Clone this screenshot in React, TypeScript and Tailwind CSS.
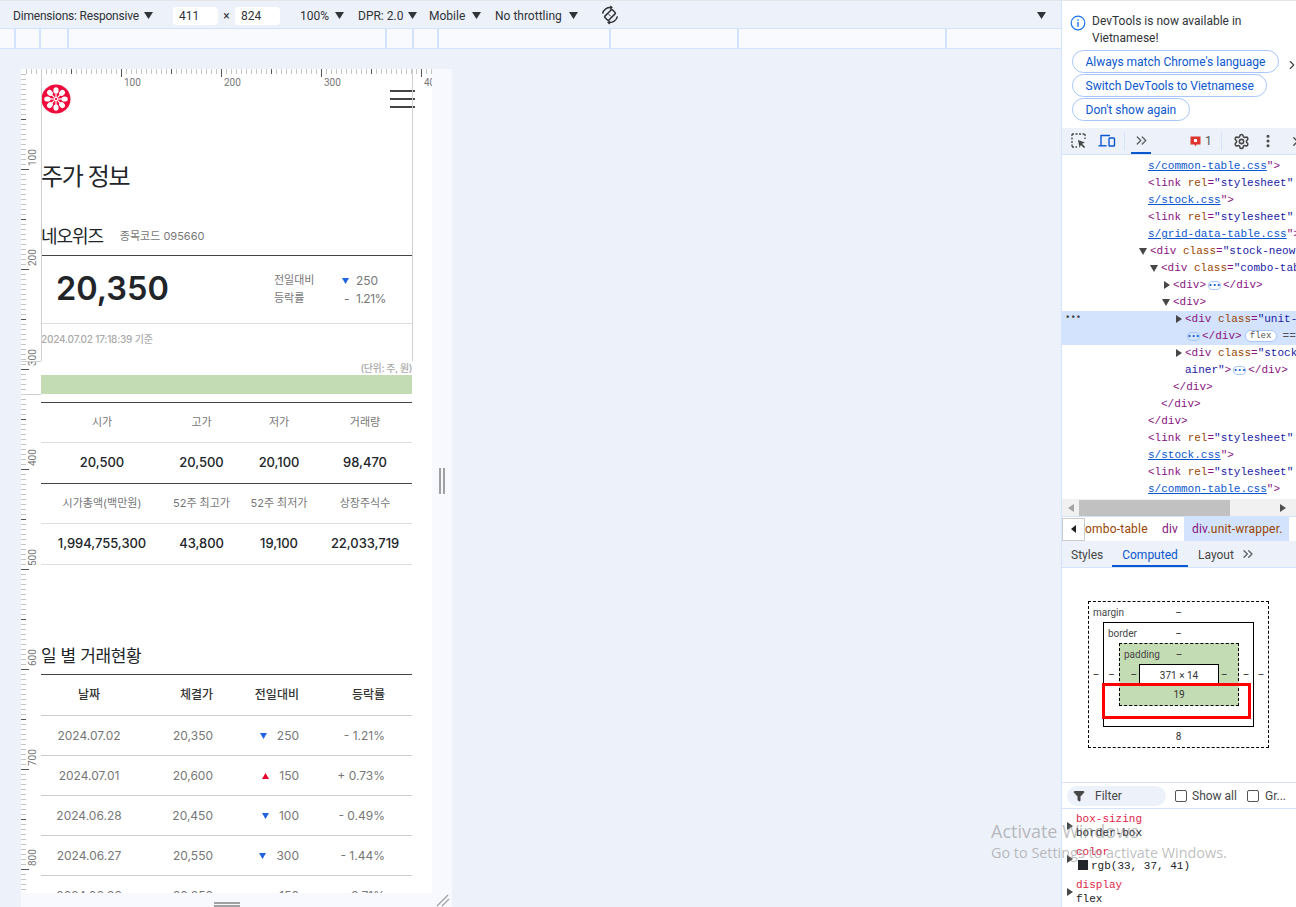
import React from "react";
import { ChevronsRight, ChevronRight, Settings, MoreVertical, X, Filter } from "lucide-react";

const KR = "font-['Inter','Noto_Sans_CJK_KR',sans-serif]";
const UI = "font-['Roboto','Noto_Sans',sans-serif]";
const MONO = "font-['Liberation_Mono','DejaVu_Sans_Mono',monospace]";

function Caret({ className = "" }: { className?: string }) {
  return (
    <svg width="9" height="7" viewBox="0 0 9 7" className={"flex-none " + className}>
      <polygon points="0,0 9,0 4.5,7" fill="#303338" />
    </svg>
  );
}

function Tri({ up = false, className = "" }: { up?: boolean; className?: string }) {
  return (
    <svg width="7" height="6" viewBox="0 0 7 6" className={"flex-none " + className}>
      {up ? <polygon points="3.5,0 7,6 0,6" fill="#e8002d" /> : <polygon points="0,0 7,0 3.5,6" fill="#2264e0" />}
    </svg>
  );
}

function Logo() {
  const arms = [0, 45, 90, 135, 180, 225, 270, 315];
  return (
    <svg width="30" height="30" viewBox="0 0 30 30" className="flex-none">
      <circle cx="15" cy="15" r="14.5" fill="#f00a3c" />
      {arms.map((a) => (
        <g key={a} transform={`rotate(${a} 15 15)`}>
          <line x1="15" y1="13" x2="15" y2="8" stroke="#fff" strokeWidth="1.2" />
          <ellipse cx="15" cy="6.4" rx="2.6" ry="3.2" fill="#fff" />
        </g>
      ))}
      <circle cx="15" cy="15" r="1.6" fill="none" stroke="#fff" strokeWidth="1" />
    </svg>
  );
}

function RulerTop() {
  const ticks = [];
  for (let i = 1; i <= 82; i++) {
    const v = i * 5;
    const major = v % 100 === 0;
    const mid = v % 50 === 0;
    ticks.push(
      <line key={i} x1={v + 0.5} x2={v + 0.5} y1="0" y2={major ? 8 : 5} stroke={major || mid ? "#555" : "#c4c4c4"} />
    );
  }
  return (
    <svg width="411" height="20" viewBox="0 0 411 20" className="absolute left-0 top-0">
      {ticks}
      {[100, 200, 300, 400].map((v) => (
        <text key={v} x={v + 3} y="17" fontSize="10" fill="#777" fontFamily="Roboto, sans-serif">{v}</text>
      ))}
    </svg>
  );
}

function RulerLeft() {
  const ticks = [];
  for (let i = 1; i <= 164; i++) {
    const v = i * 5;
    const major = v % 100 === 0;
    const mid = v % 50 === 0;
    ticks.push(
      <line key={i} y1={v + 0.5} y2={v + 0.5} x1="0" x2={major ? 8 : 5} stroke={major || mid ? "#555" : "#c4c4c4"} />
    );
  }
  return (
    <svg width="20" height="824" viewBox="0 0 20 824" className="absolute left-0 top-0">
      {ticks}
      {[100, 200, 300, 400, 500, 600, 700, 800].map((v) => (
        <text key={v} x="0" y="0" transform={`translate(15 ${v - 3}) rotate(-90)`} fontSize="10" fill="#777" fontFamily="Roboto, sans-serif">{v}</text>
      ))}
    </svg>
  );
}

function StatTable({ heads, vals, last }: { heads: string[]; vals: string[]; last?: boolean }) {
  const cols = "grid grid-cols-[122px_77px_78px_94px] text-center";
  return (
    <div>
      <div className={cols + " h-[40px] items-center text-[11px] text-[#777] border-b border-[#ddd]"}>
        {heads.map((h) => <div key={h} className="whitespace-nowrap">{h}</div>)}
      </div>
      <div className={cols + " h-[41px] items-center text-[13px] font-medium text-[#212529] border-b tracking-[-0.05px] " + (last ? "border-[#ddd]" : "border-[#444]")}>
        {vals.map((v, i) => <div key={i}>{v}</div>)}
      </div>
    </div>
  );
}

const days = [
  { d: "2024.07.02", p: "20,350", c: "250", r: "- 1.21%" },
  { d: "2024.07.01", p: "20,600", c: "150", r: "+ 0.73%", up: true },
  { d: "2024.06.28", p: "20,450", c: "100", r: "- 0.49%" },
  { d: "2024.06.27", p: "20,550", c: "300", r: "- 1.44%" },
  { d: "2024.06.26", p: "20,850", c: "150", r: "- 0.71%" },
];

function Device() {
  return (
    <div className={"relative w-[411px] h-[824px] bg-white overflow-hidden " + KR}>
      <div className="pl-[20px] w-[391px]">
        <div className="h-[58px] pt-[15px] flex justify-between items-start">
          <Logo />
          <div className="flex flex-col gap-[6px] mt-[6px] -mr-[3px] w-[25px]">
            <div className="h-[2px] bg-[#444]" />
            <div className="h-[2px] bg-[#444]" />
            <div className="h-[2px] bg-[#444]" />
          </div>
        </div>
        <h1 className="mt-[30px] mb-[-1px] h-[40px] flex items-center text-[24px] font-normal text-[#212529] tracking-[-1.4px]">주가 정보</h1>
        <div className="h-[60px] pt-[21px] flex items-center border-b border-[#444]">
          <span className="text-[18px] text-[#212529] tracking-[-1.1px]">네오위즈</span>
          <span className="ml-[17px] text-[11px] text-[#777]">종목코드 095660</span>
        </div>
        <div className="h-[68px] flex items-center border-b border-[#ddd]">
          <span className="ml-[15px] w-[218px] text-[32.5px] font-semibold text-[#212529] leading-none">20,350</span>
          <div className="text-[12px] text-[#777]">
            <div className="h-[18px] flex items-center">
              <span className="w-[68px] text-[11px]">전일대비</span>
              <Tri />
              <span className="ml-[7px]">250</span>
            </div>
            <div className="h-[18px] flex items-center">
              <span className="w-[70px] text-[11px]">등락률</span>
              <span className="w-[12px]">-</span>
              <span className="tracking-[-0.5px]">1.21%</span>
            </div>
          </div>
        </div>
        <div className="h-[30px] flex items-center text-[10px] font-medium text-[#aaa] tracking-[-0.2px]">2024.07.02 17:18:39 기준</div>
        <div className="mt-[7px] h-[14px] flex justify-end items-center text-[10px] font-medium text-[#aaa] tracking-[-0.4px]">(단위: 주, 원)</div>
        <div className="h-[19px] mb-[8px] bg-[#c4dcb3]" />
        <div className="border-t border-[#444]">
          <StatTable heads={["시가", "고가", "저가", "거래량"]} vals={["20,500", "20,500", "20,100", "98,470"]} />
          <StatTable heads={["시가총액(백만원)", "52주 최고가", "52주 최저가", "상장주식수"]} vals={["1,994,755,300", "43,800", "19,100", "22,033,719"]} last />
        </div>
        <h2 className="mt-[78px] h-[28px] flex items-center text-[17px] font-normal text-[#212529] tracking-[-0.4px]">일 별 거래현황</h2>
        <div className="mt-[3px] border-t border-[#444]">
          <div className="h-[41px] grid grid-cols-[96px_76px_86px_86px] items-center text-[12px] font-medium text-[#333] border-b border-[#ccc]">
            <div className="text-center">날짜</div>
            <div className="text-right">체결가</div>
            <div className="text-right">전일대비</div>
            <div className="text-right">등락률</div>
          </div>
          {days.map((r) => (
            <div key={r.d} className="h-[40px] grid grid-cols-[96px_76px_86px_86px] items-center text-[12px] text-[#777] border-b border-[#ccc]">
              <div className="text-center">{r.d}</div>
              <div className="text-right">{r.p}</div>
              <div className="flex justify-end items-center gap-[10px]"><Tri up={r.up} /><span>{r.c}</span></div>
              <div className="text-right">{r.r}</div>
            </div>
          ))}
        </div>
      </div>
      {/* inspector rulers and guides drawn over the page */}
      <RulerTop />
      <RulerLeft />
      <div className="absolute left-[20px] top-0 h-[292px] w-px bg-[#d0d0d0]" />
      <div className="absolute left-[391px] top-0 h-[292px] w-px bg-[#d0d0d0]" />
      <div className="absolute left-0 top-[292px] h-px w-[20px] bg-[#d0d0d0]" />
      <div className="absolute left-0 top-[325px] h-px w-[20px] bg-[#d0d0d0]" />
    </div>
  );
}

function Toolbar() {
  return (
    <div className={"h-[25px] pt-[2px] flex items-center bg-[#edf1f9] text-[12px] text-[#303338] border-b border-[#d3e3fd] box-content " + UI}>
      <span className="ml-[13px] w-[131px] whitespace-nowrap tracking-[-0.2px]">Dimensions: Responsive</span>
      <Caret />
      <span className="ml-[20px] w-[45px] h-[18px] rounded-[4px] bg-white pl-[6px] leading-[18px]">411</span>
      <span className="w-[17px] text-center">×</span>
      <span className="w-[45px] h-[18px] rounded-[4px] bg-white pl-[6px] leading-[18px]">824</span>
      <span className="ml-[20px] w-[35px]">100%</span>
      <Caret />
      <span className="ml-[14px] w-[49px] whitespace-nowrap">DPR: 2.0</span>
      <Caret className="ml-[1px]" />
      <span className="ml-[12px] w-[43px]">Mobile</span>
      <Caret />
      <span className="ml-[14px] w-[74px] whitespace-nowrap">No throttling</span>
      <Caret />
      <svg width="20" height="20" viewBox="0 0 20 20" className="ml-[22px] -mt-[2px] flex-none" fill="none" stroke="#303338" strokeWidth="1.5">
        <rect x="7.2" y="4.6" width="5.6" height="10.8" rx="1" transform="rotate(45 10 10)" />
        <path d="M8.6 9.2 L10.8 11.4" strokeWidth="1" />
        <path d="M2.6 8.6 A7.6 7.6 0 0 1 11.4 2.6" />
        <path d="M17.4 11.4 A7.6 7.6 0 0 1 8.6 17.4" />
        <path d="M10.2 0.8 L12 2.6 L10 4.4" strokeWidth="1.2" />
        <path d="M9.8 19.2 L8 17.4 L10 15.6" strokeWidth="1.2" />
      </svg>
      <span className="flex-1" />
      <Caret className="mr-[15px]" />
    </div>
  );
}

function MediaBar() {
  return (
    <div className="h-[19px] flex bg-[#f9fafe] border-b border-[#d3e3fd] box-content">
      <div className="w-[16px] border-r-2 border-[#d3e3fd]" />
      <div className="w-[25px] border-r-2 border-[#d3e3fd]" />
      <div className="w-[28px] border-r-2 border-[#d3e3fd]" />
      <div className="w-[318px] border-r-2 border-[#d3e3fd]" />
      <div className="w-[27px] border-r-2 border-[#d3e3fd]" />
      <div className="w-[25px] border-r-2 border-[#d3e3fd]" />
      <div className="w-[172px] border-r-2 border-[#d3e3fd]" />
      <div className="w-[128px] border-r-2 border-[#d3e3fd]" />
      <div className="w-[208px] border-r-2 border-[#d3e3fd]" />
    </div>
  );
}

function Left() {
  return (
    <div className="w-[1061px] h-full flex-none flex flex-col bg-[#edf1f9]">
      <div className="h-px bg-[#e3e5e8]" />
      <Toolbar />
      <MediaBar />
      <div className="flex-1 pl-[21px] pt-[20px] overflow-hidden">
        <div className="w-[431px]">
          <div className="flex">
            <Device />
            <div className="w-[20px] h-[824px] bg-[#f8f9fe] flex justify-center items-center">
              <div className="w-[6px] h-[26px] border-x-2 border-[#a0a0a0]" />
            </div>
          </div>
          <div className="h-[14px] bg-[#f8f9fe] flex items-end">
            <div className="w-[26px] h-[5px] ml-[193px] border-y-2 border-[#a0a0a0]" />
            <svg width="14" height="14" viewBox="0 0 14 14" className="ml-[196px]" stroke="#a0a0a0" strokeWidth="1.3">
              <line x1="1" y1="13" x2="12" y2="2" />
              <line x1="6" y1="13" x2="13" y2="6" />
            </svg>
          </div>
        </div>
      </div>
    </div>
  );
}

function Tg({ children }: { children: React.ReactNode }) {
  return <span className="text-[#881280]">{children}</span>;
}
function At({ children }: { children: React.ReactNode }) {
  return <span className="text-[#994500]">{children}</span>;
}
function Vl({ children }: { children: React.ReactNode }) {
  return <span className="text-[#1a1aa6]">{children}</span>;
}
function Lk({ children }: { children: React.ReactNode }) {
  return <span className="text-[#0b57d0] underline">{children}</span>;
}
function Dots() {
  return <span className="inline-flex items-center justify-center align-middle w-[13px] h-[9px] mx-[2px] rounded-[4px] border border-[#a8c7fa] text-[#0b57d0] text-[7px] leading-none font-bold">•••</span>;
}
function Row({ x, sel, children }: { x: string; sel?: boolean; children: React.ReactNode }) {
  return (
    <div className={"relative h-[17px] leading-[17px] whitespace-nowrap " + x + (sel ? " bg-[#d3e3fd]" : "")}>
      {children}
    </div>
  );
}
function Arr({ d }: { d?: boolean }) {
  return d ? (
    <svg width="8" height="7" viewBox="0 0 8 7" className="inline-block mr-[3px]"><polygon points="0,0 8,0 4,7" fill="#474747" /></svg>
  ) : (
    <svg width="6" height="8" viewBox="0 0 6 8" className="inline-block mr-[3px]"><polygon points="0,0 6,4 0,8" fill="#474747" /></svg>
  );
}

function Tree() {
  const link = <><Tg>&lt;link</Tg> <At>rel</At><Tg>=</Tg><Vl>"stylesheet"</Vl></>;
  return (
    <div className={"h-[344px] pt-[3px] overflow-hidden text-[11px] " + MONO}>
      <Row x="pl-[86px]"><Lk>s/common-table.css</Lk><Tg>"&gt;</Tg></Row>
      <Row x="pl-[86px]">{link}</Row>
      <Row x="pl-[86px]"><Lk>s/stock.css</Lk><Tg>"&gt;</Tg></Row>
      <Row x="pl-[86px]">{link}</Row>
      <Row x="pl-[86px]"><Lk>s/grid-data-table.css</Lk><Tg>"&gt;</Tg></Row>
      <Row x="pl-[77px]"><Arr d /><Tg>&lt;div</Tg> <At>class</At><Tg>=</Tg><Vl>"stock-neow</Vl></Row>
      <Row x="pl-[88px]"><Arr d /><Tg>&lt;div</Tg> <At>class</At><Tg>=</Tg><Vl>"combo-tab</Vl></Row>
      <Row x="pl-[102px]"><Arr /><Tg>&lt;div&gt;</Tg><Dots /><Tg>&lt;/div&gt;</Tg></Row>
      <Row x="pl-[100px]"><Arr d /><Tg>&lt;div&gt;</Tg></Row>
      <Row x="pl-[114px]" sel><span className="absolute left-[3px] top-[-1px] text-[#474747] font-bold text-[9px]">•••</span><Arr /><Tg>&lt;div</Tg> <At>class</At><Tg>=</Tg><Vl>"unit-</Vl></Row>
      <Row x="pl-[123px]" sel><Dots /><Tg>&lt;/div&gt;</Tg><span className="inline-flex items-center justify-center align-middle ml-[3px] mr-[6px] w-[32px] h-[12px] rounded-full bg-white border border-[#a8c7fa] text-[9px] text-[#555]">flex</span><span className="text-[#555]">==</span></Row>
      <Row x="pl-[114px]"><Arr /><Tg>&lt;div</Tg> <At>class</At><Tg>=</Tg><Vl>"stock</Vl></Row>
      <Row x="pl-[123px]"><Vl>ainer"</Vl><Tg>&gt;</Tg><Dots /><Tg>&lt;/div&gt;</Tg></Row>
      <Row x="pl-[111px]"><Tg>&lt;/div&gt;</Tg></Row>
      <Row x="pl-[99px]"><Tg>&lt;/div&gt;</Tg></Row>
      <Row x="pl-[86px]"><Tg>&lt;/div&gt;</Tg></Row>
      <Row x="pl-[86px]">{link}</Row>
      <Row x="pl-[86px]"><Lk>s/stock.css</Lk><Tg>"&gt;</Tg></Row>
      <Row x="pl-[86px]">{link}</Row>
      <Row x="pl-[86px]"><Lk>s/common-table.css</Lk><Tg>"&gt;</Tg></Row>
    </div>
  );
}

function BoxModel() {
  return (
    <div className="relative h-[214px] pl-[26px] pt-[33px] text-[10px] text-[#333] text-center">
      <div className="w-[181px] h-[147px] border border-dashed border-black flex flex-col">
        <div className="h-[20px] relative leading-[22px]"><span className="absolute left-[4px] text-[#474747]">margin</span>–</div>
        <div className="h-[105px] flex items-center">
          <span className="w-[14px]">–</span>
          <div className="w-[151px] h-[105px] border border-black flex flex-col">
            <div className="h-[20px] relative leading-[22px]"><span className="absolute left-[4px] text-[#474747]">border</span>–</div>
            <div className="h-[63px] flex items-center">
              <span className="w-[15px]">–</span>
              <div className="w-[120px] h-[63px] border border-dashed border-black bg-[#c4dcb3] flex flex-col">
                <div className="h-[20px] relative leading-[22px]"><span className="absolute left-[4px] text-[#474747]">padding</span>–</div>
                <div className="h-[21px] flex items-center">
                  <span className="w-[19px] text-right pr-[2px]">–</span>
                  <div className="w-[80px] h-[21px] bg-white border border-black leading-[21px]">371 × 14</div>
                  <span className="w-[19px] text-left pl-[2px]">–</span>
                </div>
                <div className="h-[20px] leading-[20px]">19</div>
              </div>
              <span className="w-[14px]">–</span>
            </div>
            <div className="h-[20px]" />
          </div>
          <span className="w-[14px]">–</span>
        </div>
        <div className="h-[20px] leading-[20px]">8</div>
      </div>
      <div className="absolute left-[40px] top-[115px] w-[149px] h-[36px] border-[3px] border-[#f00]" />
    </div>
  );
}

function Check({ className = "" }: { className?: string }) {
  return <span className={"w-[12px] h-[12px] rounded-[2px] border border-[#555] bg-white flex-none " + className} />;
}

function Prop({ name, children }: { name: string; children: React.ReactNode }) {
  return (
    <div className="relative pl-[14px] h-[33px] leading-[14px]">
      <svg width="6" height="8" viewBox="0 0 6 8" className="absolute left-[5px] top-[10px]"><polygon points="0,0 6,4 0,8" fill="#474747" /></svg>
      <div className="text-[#dc1f4a]">{name}</div>
      <div className="text-[#202124]">{children}</div>
    </div>
  );
}

function Devtools() {
  return (
    <div className={"flex-1 h-full flex flex-col bg-white border-l border-[#d3e3fd] min-w-0 overflow-hidden " + UI}>
      <div className="h-px bg-[#e3e5e8] flex-none" />
      <div className="h-[127px] flex-none relative text-[12px] pl-[8px] pt-[12px]">
        <div className="flex items-start">
          <svg width="16" height="16" viewBox="0 0 16 16" className="flex-none mt-[2px]" fill="none">
            <circle cx="8" cy="8" r="6.8" stroke="#1a73e8" strokeWidth="1.2" />
            <rect x="7.3" y="7" width="1.4" height="4.8" fill="#1a73e8" />
            <rect x="7.3" y="4.4" width="1.4" height="1.5" fill="#1a73e8" />
          </svg>
          <div className="ml-[6px] leading-[16.5px] text-[#303338] w-[160px]">DevTools is now available in Vietnamese!</div>
        </div>
        <div className="mt-[4px] flex flex-col items-start gap-px ml-[2px] text-[#0b57d0]">
          <span className="h-[23px] px-[12.5px] leading-[22px] rounded-full border border-[#a8c7fa] whitespace-nowrap">Always match Chrome's language</span>
          <span className="h-[23px] px-[12.5px] leading-[22px] rounded-full border border-[#a8c7fa] whitespace-nowrap">Switch DevTools to Vietnamese</span>
          <span className="h-[23px] px-[12.5px] leading-[22px] rounded-full border border-[#a8c7fa] whitespace-nowrap">Don't show again</span>
        </div>
        <ChevronRight size={14} strokeWidth={2} className="absolute right-[-3px] top-[57px] text-[#444]" />
      </div>
      <div className="h-[27px] flex-none flex items-center bg-[#edf1f9] border-b border-[#d3e3fd] text-[12px] text-[#555]">
        <svg width="16" height="16" viewBox="0 0 16 16" className="ml-[9px] flex-none" fill="none" stroke="#474747" strokeWidth="1.3">
          <path d="M1 1h13M1 1v13M14 1v5M1 14h5" strokeDasharray="2 1.5" />
          <path d="M7 7l7 2.5-3 1.2 3.2 3.2-1.2 1.2-3.2-3.2-1.2 3z" fill="#474747" stroke="none" />
        </svg>
        <svg width="18" height="16" viewBox="0 0 18 16" className="ml-[11px] flex-none" fill="none" stroke="#0b57d0" strokeWidth="1.4">
          <path d="M3 12V2.5h9" />
          <path d="M0.5 12.8h8" />
          <rect x="11" y="5" width="5.5" height="8" rx="0.8" />
        </svg>
        <span className="w-px h-[18px] bg-[#d3e3fd] ml-[8px] flex-none" />
        <span className="ml-[6px] w-[20px] h-[26px] flex items-center justify-center border-b-2 border-[#0b57d0] flex-none">
          <ChevronsRight size={17} className="text-[#5f6368]" />
        </span>
        <svg width="11" height="11" viewBox="0 0 11 11" className="ml-[39px] flex-none">
          <path d="M0.5 0.5h10v8H6.5l-1 2-1-2h-4z" fill="#dc362e" />
          <rect x="4" y="3" width="3" height="3" fill="#fff" />
        </svg>
        <span className="ml-[4px] w-[10px] flex-none">1</span>
        <span className="w-px h-[18px] bg-[#d3e3fd] ml-[6px] flex-none" />
        <Settings size={17} strokeWidth={2.2} className="ml-[11px] text-[#474747] flex-none" />
        <MoreVertical size={16} strokeWidth={2.6} className="ml-[10px] text-[#474747] flex-none" />
        <X size={15} strokeWidth={2} className="ml-[14px] text-[#474747] flex-none" />
      </div>
      <Tree />
      <div className="h-[17px] flex-none bg-[#f1f1f1] flex items-center relative">
        <svg width="6" height="8" viewBox="0 0 6 8" className="ml-[6px]"><polygon points="6,0 0,4 6,8" fill="#a3a3a3" /></svg>
        <div className="ml-[5px] w-[151px] h-[16px] bg-[#c1c1c1]" />
        <svg width="6" height="8" viewBox="0 0 6 8" className="ml-[50px]"><polygon points="0,0 6,4 0,8" fill="#505050" /></svg>
      </div>
      <div className="h-[25px] flex-none flex items-center text-[12px] tracking-[0.2px] whitespace-nowrap overflow-hidden border-t border-[#d3e3fd]">
        <span className="w-[23px] h-[23px] bg-white border border-[#ccc] flex items-center justify-center flex-none">
          <svg width="5" height="8" viewBox="0 0 5 8"><polygon points="5,0 0,4 5,8" fill="#202124" /></svg>
        </span>
        <span className="w-[77px] text-[#994500]">ombo-table</span>
        <span className="w-[22px] text-[#881280]">div</span>
        <span className="h-full w-[105px] pl-[8px] bg-[#d3e3fd] leading-[24px]"><span className="text-[#881280]">div</span><span className="text-[#994500]">.unit-wrapper.</span></span>
      </div>
      <div className="h-[27px] flex-none flex items-stretch bg-[#edf1f9] border-b border-[#d3e3fd] text-[12px] text-[#474747]">
        <span className="w-[50px] pl-[9px] leading-[28px]">Styles</span>
        <span className="w-[76px] text-center text-[#0b57d0] border-b-2 border-[#0b57d0] leading-[28px]">Computed</span>
        <span className="w-[52px] pl-[10px] leading-[28px]">Layout</span>
        <span className="flex items-center"><ChevronsRight size={16} className="text-[#5f6368]" /></span>
      </div>
      <BoxModel />
      <div className="h-[27px] flex-none flex items-center border-y border-[#d3e3fd] text-[12px] text-[#474747]">
        <span className="ml-[5px] w-[99px] h-[20px] rounded-full bg-[#edf1f9] flex items-center flex-none">
          <Filter size={12} className="ml-[6px] text-[#474747]" fill="#474747" />
          <span className="ml-[10px]">Filter</span>
        </span>
        <Check className="ml-[9px]" />
        <span className="ml-[5px] w-[50px] whitespace-nowrap">Show all</span>
        <Check className="ml-[5px]" />
        <span className="ml-[6px] whitespace-nowrap">Gr...</span>
      </div>
      <div className={"flex-1 pt-[3px] text-[11px] overflow-hidden " + MONO}>
        <Prop name="box-sizing">border-box</Prop>
        <Prop name="color"><span className="inline-block w-[10px] h-[10px] bg-[#212529] mr-[3px] ml-[2px] align-[-1px]" />rgb(33, 37, 41)</Prop>
        <Prop name="display">flex</Prop>
      </div>
    </div>
  );
}

export default function App() {
  return (
    <div className="relative w-[1296px] h-[907px] flex overflow-hidden bg-white">
      <Left />
      <Devtools />
      <div className="absolute left-[991px] top-[819px] pointer-events-none whitespace-nowrap text-[#7d7d7d]/50 font-['Open_Sans',sans-serif]">
        <div className="text-[18px] leading-[24px]">Activate Windows</div>
        <div className="text-[14.4px] leading-[20px]">Go to Settings to activate Windows.</div>
      </div>
    </div>
  );
}
